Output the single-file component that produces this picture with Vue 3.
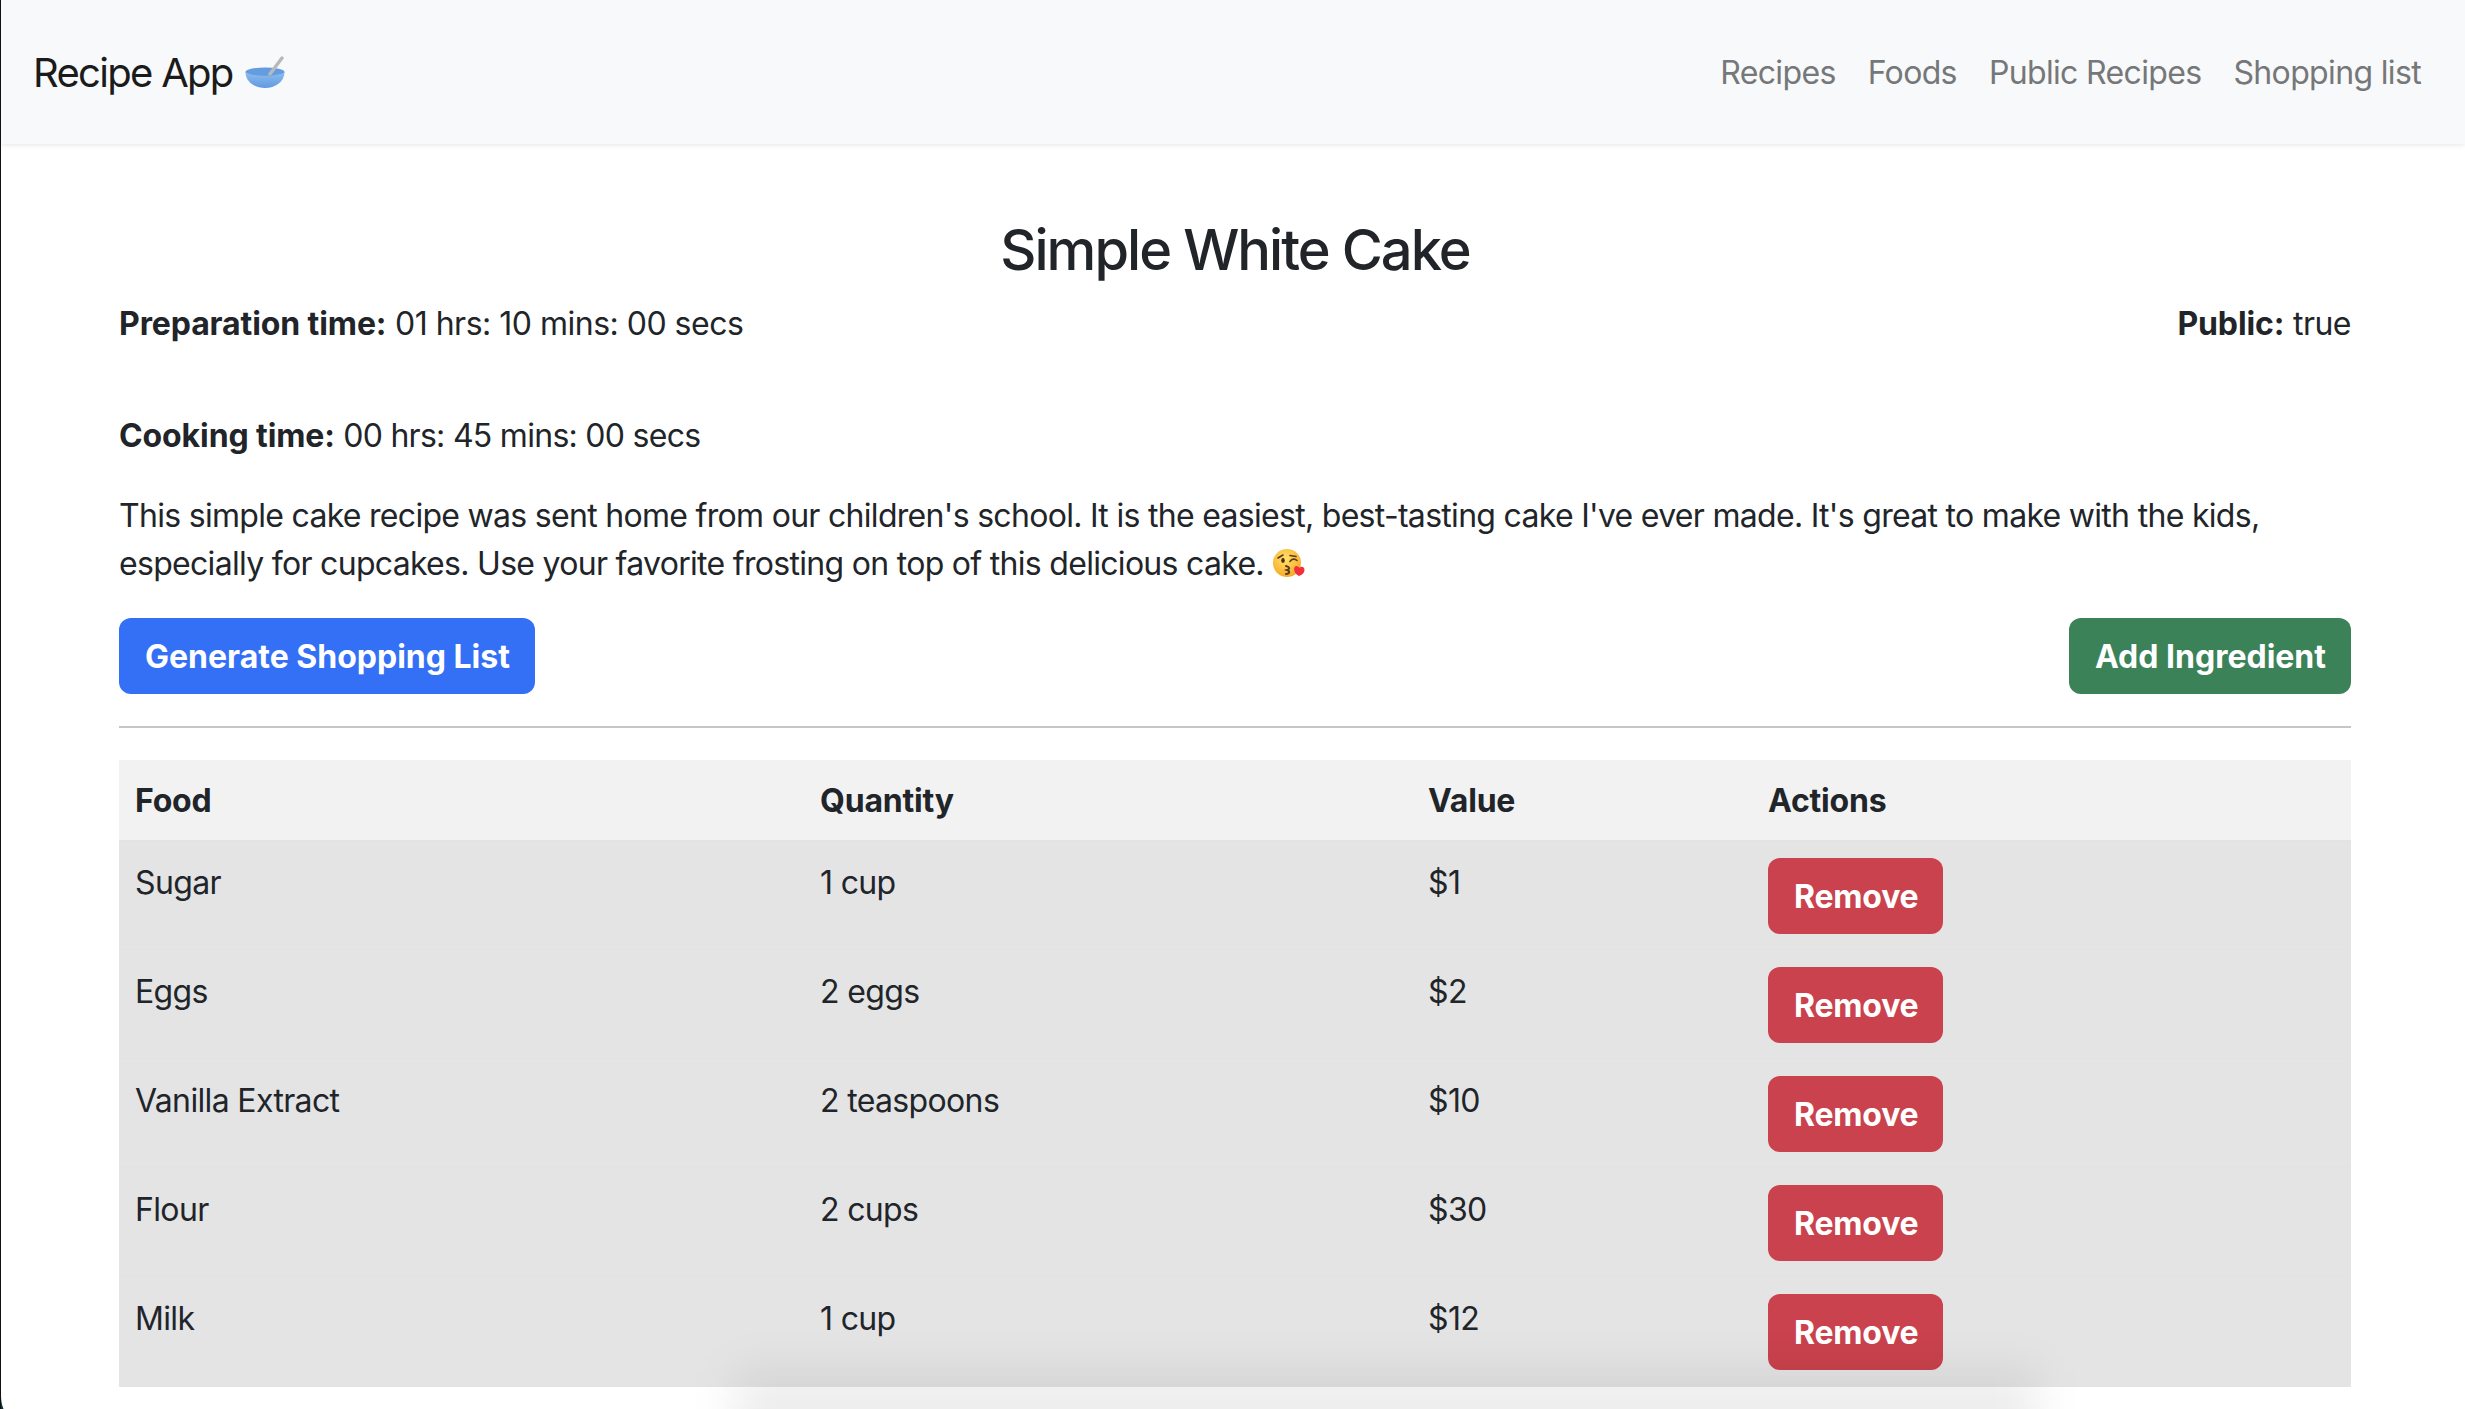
<template>
  <div class="page">
    <nav class="navbar">
      <a class="brand">Recipe App
        <svg class="bowl" viewBox="0 0 40 34">
          <defs>
            <linearGradient id="bowlBody" x1="0" y1="0" x2="0" y2="1">
              <stop offset="0%" stop-color="#8fbcf0" />
              <stop offset="100%" stop-color="#5f9ae0" />
            </linearGradient>
          </defs>
          <ellipse cx="20" cy="16" rx="19.5" ry="4.5" fill="#639cdf" />
          <path d="M25 18 L37 2" stroke="#b9b9bb" stroke-width="3.4" stroke-linecap="round" />
          <path d="M.5 16 C6 21 34 21 39.5 16 C39.5 26 30 32 20 32 C10 32 .5 26 .5 16 Z" fill="url(#bowlBody)" />
        </svg>
      </a>
      <ul class="nav-links">
        <li v-for="link in links" :key="link">{{ link }}</li>
      </ul>
    </nav>

    <main class="content">
      <h2 class="title">Simple White Cake</h2>
      <div class="meta-row">
        <p><b>Preparation time:</b> 01 hrs: 10 mins: 00 secs</p>
        <p><b>Public:</b> true</p>
      </div>
      <p class="cooking"><b>Cooking time:</b> 00 hrs: 45 mins: 00 secs</p>
      <p class="description">
        This simple cake recipe was sent home from our children's school. It is the easiest, best-tasting cake I've ever made. It's great to make with the kids, especially for cupcakes. Use your favorite frosting on top of this delicious cake.
        <svg class="kiss" viewBox="0 0 32 32">
          <defs>
            <radialGradient id="face" cx="45%" cy="35%" r="70%">
              <stop offset="0%" stop-color="#ffe26a" />
              <stop offset="100%" stop-color="#f6a623" />
            </radialGradient>
          </defs>
          <circle cx="14" cy="15" r="14" fill="url(#face)" />
          <path d="M5 10 L10 7 M17 7.5 L23 8.5 M17 13.5 C19 10.5 22 10.5 24 12.5" stroke="#5b3a1a" stroke-width="1.6" fill="none" stroke-linecap="round" />
          <ellipse cx="10" cy="12.5" rx="1.8" ry="2.4" fill="#4a2f14" />
          <path d="M13 18 C17 19 17 21 14 22 C17 23 17 26 13 26" stroke="#5b3a1a" stroke-width="2" fill="none" stroke-linecap="round" />
          <path d="M26 28 C20 25 20 18 23.5 18 C25 18 26 19 26.5 20 C27.5 18 31.5 18 31.5 22 C31.5 25 29 27 26 28 Z" fill="#f0303c" />
        </svg>
      </p>
      <div class="actions">
        <button class="btn btn-primary">Generate Shopping List</button>
        <button class="btn btn-success">Add Ingredient</button>
      </div>
      <hr />
      <table>
        <thead>
          <tr>
            <th class="col-food">Food</th>
            <th class="col-qty">Quantity</th>
            <th class="col-value">Value</th>
            <th>Actions</th>
          </tr>
        </thead>
        <tbody>
          <tr v-for="row in rows" :key="row.food">
            <td>{{ row.food }}</td>
            <td>{{ row.qty }}</td>
            <td>{{ row.value }}</td>
            <td><button class="btn btn-danger">Remove</button></td>
          </tr>
        </tbody>
      </table>
    </main>
    <div class="bottom-shadow"></div>
    <svg class="window-corner" viewBox="0 0 4 14">
      <path d="M0 0 L1 0 C1 5 1.5 9 3.5 14 L0 14 Z" fill="#12303c" />
    </svg>
  </div>
</template>

<script setup>
const links = ['Recipes', 'Foods', 'Public Recipes', 'Shopping list']

const rows = [
  { food: 'Sugar', qty: '1 cup', value: '$1' },
  { food: 'Eggs', qty: '2 eggs', value: '$2' },
  { food: 'Vanilla Extract', qty: '2 teaspoons', value: '$10' },
  { food: 'Flour', qty: '2 cups', value: '$30' },
  { food: 'Milk', qty: '1 cup', value: '$12' }
]
</script>

<style>
html, body {
  margin: 0;
  height: 100%;
  overflow: hidden;
  background: #fff;
}
</style>

<style scoped>
.page {
  position: relative;
  height: 1409px;
  overflow: hidden;
  box-sizing: border-box;
  border-left: 1px solid #111;
  font-family: Inter, "Liberation Sans", sans-serif;
  font-size: 32px;
  line-height: 48px;
  letter-spacing: -0.65px;
  color: #212529;
}
.navbar {
  height: 144px;
  background: #f8f9fa;
  box-shadow: 0 1px 5px rgba(0, 0, 0, 0.1);
  display: flex;
  align-items: center;
  justify-content: space-between;
  padding: 2px 44px 0 32px;
  box-sizing: border-box;
  position: relative;
}
.brand {
  font-size: 40px;
  letter-spacing: -1.7px;
  color: #1b1b1b;
  display: flex;
  align-items: center;
  gap: 12px;
}
.bowl {
  width: 40px;
  height: 34px;
}
.nav-links {
  list-style: none;
  display: flex;
  gap: 32px;
  margin: 0;
  padding: 0;
  color: #757779;
}
.content {
  padding: 72px 0 0;
  margin: 0 114px 0 118px;
}
.title {
  font-size: 56px;
  line-height: 68px;
  font-weight: 500;
  letter-spacing: -1.95px;
  text-align: center;
  margin: 0 0 16px;
}
p {
  margin: 0;
}
b {
  font-weight: 700;
  letter-spacing: -0.1px;
}
.meta-row {
  display: flex;
  justify-content: space-between;
  margin-bottom: 64px;
  letter-spacing: -0.5px;
}
.cooking {
  margin-bottom: 32px;
  letter-spacing: -0.72px;
}
.description {
  margin-bottom: 30px;
  letter-spacing: -0.7px;
}
.kiss {
  width: 32px;
  height: 32px;
  vertical-align: -5px;
  margin-left: 1px;
}
.actions {
  display: flex;
  justify-content: space-between;
}
.btn {
  font: inherit;
  font-weight: 700;
  letter-spacing: 0;
  color: #fff;
  border: 0;
  border-radius: 12px;
  padding: 15px 25px 13px 26px;
  height: 76px;
  box-sizing: border-box;
}
.btn-primary {
  background: #3470f5;
}
.btn-success {
  background: #3c8259;
}
.btn-danger {
  background: #c9424d;
  letter-spacing: -0.2px;
  margin-top: -1px;
}
hr {
  border: 0;
  border-top: 2px solid #c6c6c6;
  margin: 32px 0;
}
table {
  width: 100%;
  border-collapse: collapse;
  table-layout: fixed;
}
th {
  text-align: left;
  font-weight: 700;
  letter-spacing: -0.2px;
  background: #f2f2f3;
  height: 80px;
  padding: 2px 16px 0;
  box-sizing: border-box;
}
td {
  background: #e4e4e5;
  height: 109px;
  padding: 18px 16px 14px;
  box-sizing: border-box;
  vertical-align: top;
  border-top: 1px solid #e1e2e2;
}
tr:last-child td {
  height: 111px;
}
.col-food {
  width: 685px;
}
.col-qty {
  width: 608px;
}
.col-value {
  width: 340px;
}
.bottom-shadow {
  position: absolute;
  left: 735px;
  width: 1300px;
  top: 1370px;
  height: 100px;
  background: rgba(0, 0, 0, 0.07);
  filter: blur(22px);
}
.window-corner {
  position: absolute;
  left: -1px;
  bottom: 0;
  width: 4px;
  height: 14px;
}
</style>
